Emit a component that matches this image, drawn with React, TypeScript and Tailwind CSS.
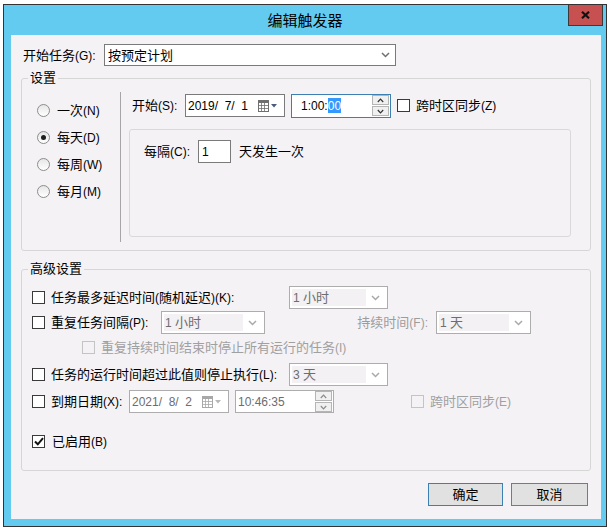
import React from "react";

const ASCII = /^[\x20-\x7e]+$/;

function T({ s, className = "" }: { s: string; className?: string }) {
  const parts = s.split(/([\x20-\x7e]+)/).filter((p) => p.length > 0);
  return (
    <span className={"whitespace-pre " + className}>
      {parts.map((p, i) =>
        ASCII.test(p) ? (
          <span key={i} className="text-[12px]">
            {p}
          </span>
        ) : (
          <span key={i}>{p}</span>
        )
      )}
    </span>
  );
}

function ChevDown({ color = "#6d6d6d" }: { color?: string }) {
  return (
    <svg width="9" height="6" viewBox="0 0 9 6">
      <path d="M1 1 L4.5 4.5 L8 1" fill="none" stroke={color} strokeWidth="1.5" />
    </svg>
  );
}

function ChevUp({ color = "#333" }: { color?: string }) {
  return (
    <svg width="7" height="5" viewBox="0 0 7 5">
      <path d="M0.8 4 L3.5 1.2 L6.2 4" fill="none" stroke={color} strokeWidth="1.2" />
    </svg>
  );
}

function ChevSmallDown({ color = "#333" }: { color?: string }) {
  return (
    <svg width="7" height="5" viewBox="0 0 7 5">
      <path d="M0.8 1 L3.5 3.8 L6.2 1" fill="none" stroke={color} strokeWidth="1.2" />
    </svg>
  );
}

function Cal({ dim }: { dim?: boolean }) {
  const c = dim ? "#a8a8a8" : "#6f6f6f";
  const t = dim ? "#b8b8b8" : "#4a5d7e";
  return (
    <svg width="20" height="12" viewBox="0 0 20 12">
      <rect x="0.5" y="0.5" width="10" height="11" fill="#fff" stroke={c} />
      <rect x="1" y="1" width="9" height="2" fill={c} />
      <path d="M1 5.5 H10 M1 8.5 H10 M3.5 3 V11 M6.5 3 V11" stroke={c} strokeWidth="0.8" />
      <path d="M13 4 H19 L16 7.5 Z" fill={t} />
    </svg>
  );
}

function Check({ checked, disabled }: { checked?: boolean; disabled?: boolean }) {
  return (
    <span
      className={
        disabled
          ? "w-[13px] h-[13px] border border-[#c4c4c4] bg-[#f5f2f6] flex items-center justify-center shrink-0"
          : "w-[13px] h-[13px] border border-[#3a3a3a] bg-white flex items-center justify-center shrink-0"
      }
    >
      {checked && (
        <svg width="10" height="9" viewBox="0 0 10 9">
          <path d="M1 4.5 L3.8 7.3 L9 1.2" fill="none" stroke="#111" strokeWidth="2" />
        </svg>
      )}
    </span>
  );
}

function Radio({ checked, label }: { checked?: boolean; label: string }) {
  return (
    <div className="h-[27px] flex items-center">
      <span className="w-[13px] h-[13px] rounded-full border border-[#8c8c8c] bg-[linear-gradient(#e6e6e6,#ffffff)] flex items-center justify-center shrink-0">
        {checked && <span className="w-[5px] h-[5px] rounded-full bg-[#1e1e1e]" />}
      </span>
      <T s={label} className="ml-[7px]" />
    </div>
  );
}

function DCombo({ cls, text }: { cls: string; text: string }) {
  return (
    <div className={"h-[23px] border border-[#adadad] bg-white flex p-[2px] " + cls}>
      <div className="flex-1 bg-[#f3f1f4] flex items-center pl-[1px] text-[#6d6d6d]">
        <T s={text} />
      </div>
      <div className="w-[19px] flex items-center justify-center">
        <ChevDown color="#a9a9a9" />
      </div>
    </div>
  );
}

function Spin({ dim }: { dim?: boolean }) {
  const c = dim ? "#8a8a8a" : "#333";
  return (
    <div className="ml-auto mr-[1px] flex flex-col gap-[1px]">
      <div className="w-[17px] h-[10px] border border-[#b5b5b5] bg-[#f0f0f0] flex items-center justify-center">
        <ChevUp color={c} />
      </div>
      <div className="w-[17px] h-[10px] border border-[#b5b5b5] bg-[#f0f0f0] flex items-center justify-center">
        <ChevSmallDown color={c} />
      </div>
    </div>
  );
}

export default function App() {
  return (
    <div className="w-[612px] h-[530px] bg-white pt-[4px] pl-[3px] font-['Liberation_Sans','Noto_Sans_CJK_SC',sans-serif] text-[13px] text-black leading-none">
      <div className="w-[604px] h-[523px] border border-[#333] bg-[#63cbf0] flex flex-col">
        {/* title bar */}
        <div className="h-[30px] relative flex items-center justify-center shrink-0">
          <span className="text-[15px] pt-[1px]">编辑触发器</span>
          <div className="absolute top-0 right-[3px] w-[35px] h-[21px] bg-[#c75050] border border-t-0 border-[#3a3a3a] flex items-center justify-center">
            <svg width="9" height="8" viewBox="0 0 9 8">
              <path d="M1 0.8 L8 7.2 M8 0.8 L1 7.2" stroke="#111" strokeWidth="2.2" />
            </svg>
          </div>
        </div>

        {/* client */}
        <div className="flex-1 pl-[7px] pr-[5px] pb-[7px] flex">
          <div className="w-[590px] bg-[#f5f2f6] flex flex-col">
            {/* 开始任务 */}
            <div className="mt-[9px] ml-[12px] flex items-center h-[22px]">
              <T s="开始任务(G):" className="w-[81px]" />
              <div className="w-[292px] h-[22px] border border-[#7a7a7a] bg-white flex items-center pl-[3px]">
                <span>按预定计划</span>
                <span className="ml-auto mr-[5px] flex">
                  <ChevDown color="#707070" />
                </span>
              </div>
            </div>

            {/* 设置 */}
            <fieldset className="mt-[4px] ml-[10px] w-[570px] min-w-0 border border-[#d6d6d6] rounded-[3px] px-0 pb-[8px]">
              <legend className="ml-[6px] px-[2px] leading-[16px]">设置</legend>
              <div className="flex pt-[6px]">
                <div className="w-[98px] pl-[15px] pt-[5px] flex flex-col">
                  <Radio label="一次(N)" />
                  <Radio label="每天(D)" checked />
                  <Radio label="每周(W)" />
                  <Radio label="每月(M)" />
                </div>
                <div className="w-px h-[150px] bg-[#a6a6a6]" />
                <div className="pl-[8px] flex flex-col">
                  <div className="mt-[2px] pl-[3px] h-[23px] flex items-center">
                    <T s="开始(S):" className="w-[53px]" />
                    <div className="w-[100px] h-[23px] border border-[#7a7a7a] bg-white flex items-center pl-[2px]">
                      <T s="2019/  7/  1" />
                      <span className="ml-auto mr-[6px] flex">
                        <Cal />
                      </span>
                    </div>
                    <div className="ml-[6px] w-[100px] h-[24px] border border-[#3c7fb1] bg-white flex items-center pl-[9px]">
                      <span className="text-[12px]">1:00:</span>
                      <span className="text-[12px] bg-[#3399ff] text-white h-[15px] flex items-center">00</span>
                      <Spin />
                    </div>
                    <span className="ml-[6px] flex">
                      <Check />
                    </span>
                    <T s="跨时区同步(Z)" className="ml-[6px]" />
                  </div>
                  <div className="mt-[12px] w-[442px] h-[108px] border border-[#d9d9d9] rounded-[3px] pt-[10px] pl-[14px]">
                    <div className="h-[23px] flex items-center">
                      <T s="每隔(C):" className="w-[54px]" />
                      <div className="w-[33px] h-[23px] border border-[#7a7a7a] bg-white flex items-center pl-[3px]">
                        <span className="text-[12px]">1</span>
                      </div>
                      <span className="ml-[8px]">天发生一次</span>
                    </div>
                  </div>
                </div>
              </div>
            </fieldset>

            {/* 高级设置 */}
            <fieldset className="mt-[10px] ml-[10px] w-[570px] min-w-0 border border-[#d6d6d6] rounded-[3px] px-0 pt-[9px] pb-[19px]">
              <legend className="ml-[6px] px-[2px] leading-[16px]">高级设置</legend>
              <div className="flex flex-col pl-[10px]">
                <div className="h-[23px] flex items-center">
                  <Check />
                  <T s="任务最多延迟时间(随机延迟)(K):" className="ml-[6px] w-[238px]" />
                  <DCombo cls="w-[99px]" text="1 小时" />
                </div>
                <div className="mt-[2px] h-[23px] flex items-center">
                  <Check />
                  <T s="重复任务间隔(P):" className="ml-[6px] w-[110px]" />
                  <DCombo cls="w-[104px]" text="1 小时" />
                  <span className="w-[171px] pr-[8px] text-right text-[#9c9c9c]">
                    <T s="持续时间(F):" />
                  </span>
                  <DCombo cls="w-[95px]" text="1 天" />
                </div>
                <div className="mt-[2px] h-[22px] flex items-center pl-[50px]">
                  <Check disabled />
                  <T s="重复持续时间结束时停止所有运行的任务(I)" className="ml-[6px] text-[#a0a0a0]" />
                </div>
                <div className="mt-[5px] h-[23px] flex items-center">
                  <Check />
                  <T s="任务的运行时间超过此值则停止执行(L):" className="ml-[6px] w-[238px]" />
                  <DCombo cls="w-[99px]" text="3 天" />
                </div>
                <div className="mt-[4px] h-[23px] flex items-center">
                  <Check />
                  <T s="到期日期(X):" className="ml-[6px] w-[78px]" />
                  <div className="w-[100px] h-[23px] border border-[#adadad] bg-white flex items-center pl-[2px] text-[#6d6d6d]">
                    <T s="2021/  8/  2" />
                    <span className="ml-auto mr-[6px] flex">
                      <Cal dim />
                    </span>
                  </div>
                  <div className="ml-[6px] w-[99px] h-[23px] border border-[#adadad] bg-white flex items-center pl-[2px] text-[#6d6d6d]">
                    <span className="text-[12px]">10:46:35</span>
                    <Spin dim />
                  </div>
                  <span className="ml-[77px] flex">
                    <Check disabled />
                  </span>
                  <T s="跨时区同步(E)" className="ml-[6px] text-[#a0a0a0]" />
                </div>
                <div className="mt-[18px] h-[20px] flex items-center">
                  <Check checked />
                  <T s="已启用(B)" className="ml-[7px]" />
                </div>
              </div>
            </fieldset>

            {/* buttons */}
            <div className="mt-[12px] flex justify-end gap-[8px] pr-[13px]">
              <button className="w-[75px] h-[23px] bg-[#e1e1e1] border border-[#3c7fb1] flex items-center justify-center">
                确定
              </button>
              <button className="w-[77px] h-[23px] bg-[#e1e1e1] border border-[#7a7a7a] flex items-center justify-center">
                取消
              </button>
            </div>
          </div>
        </div>
      </div>
    </div>
  );
}
